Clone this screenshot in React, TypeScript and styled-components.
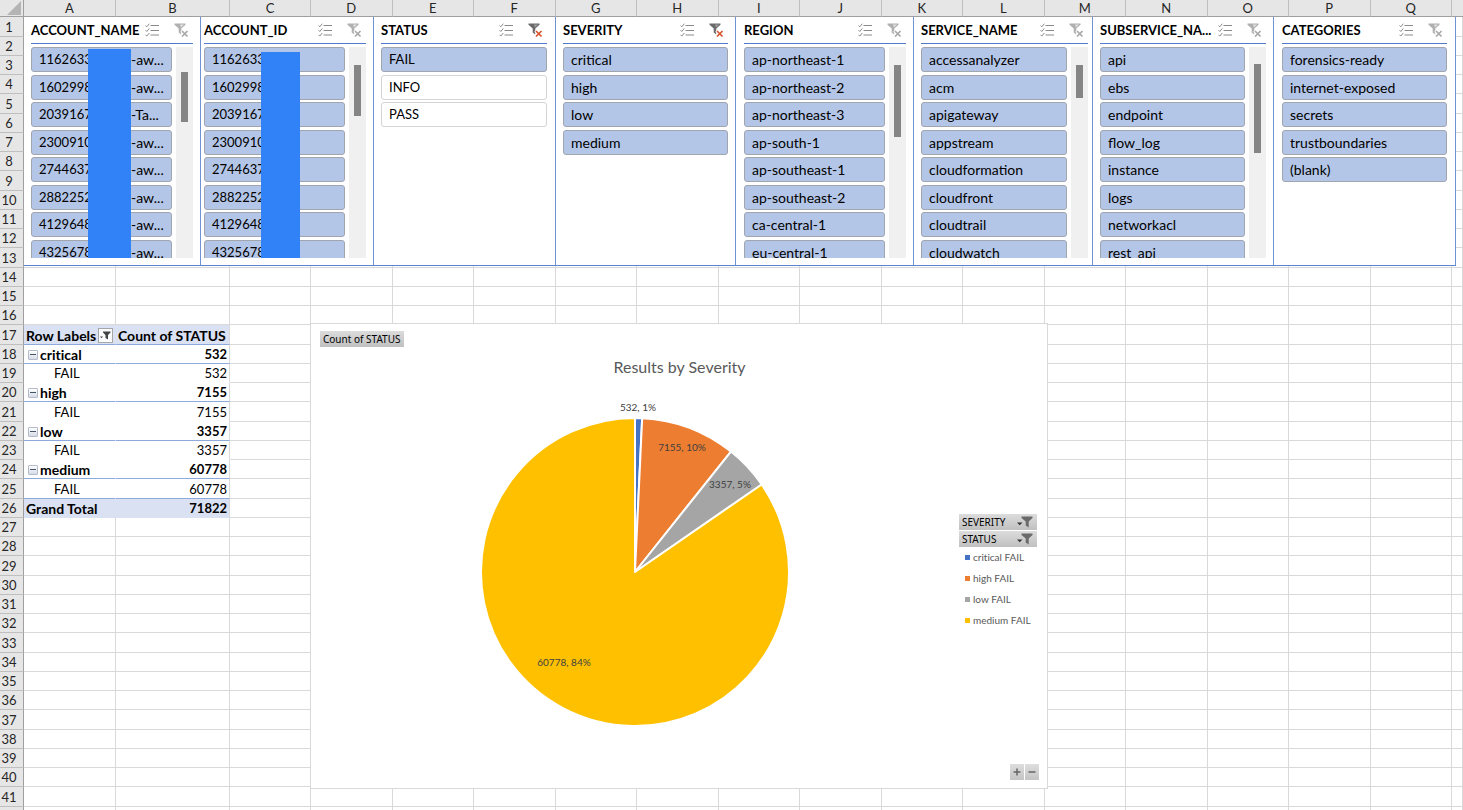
import React from "react";
import styled, { createGlobalStyle } from "styled-components";

const Global = createGlobalStyle`
  *, *::before, *::after { box-sizing: border-box; }
  html, body { margin: 0; padding: 0; background: #fff; }
  body {
    font-family: Lato, "Liberation Sans", sans-serif;
    font-variant-ligatures: none;
    color: #000;
  }
  button { font-family: inherit; color: inherit; cursor: pointer; }
`;

const Workbook = styled.main`
  position: relative;
  height: 100vh;
  overflow: hidden;
  font-size: 13px;
`;

const Sheet = styled.table`
  width: 100%;
  table-layout: fixed;
  border-collapse: separate;
  border-spacing: 0;
`;

const Col = styled.col<{ $w?: number }>`
  width: ${(p) => (p.$w ? `${p.$w}px` : "auto")};
`;

const ColumnHead = styled.th`
  height: 17px;
  padding: 0;
  background: #e6e6e6;
  border-right: 1px solid #bfbfbf;
  border-bottom: 1px solid #9f9f9f;
  font-size: 13px;
  font-weight: 400;
  line-height: 16px;
  color: #262626;
  text-align: center;
  &:first-child { border-right-color: #9f9f9f; }
  &:last-child { border-right: 0; }
`;

const CornerMark = styled.svg`
  display: block;
  margin-left: auto;
  margin-right: 2px;
`;

const RowHead = styled.th`
  padding: 1px 5px 0 0;
  background: #e6e6e6;
  border-right: 1px solid #9f9f9f;
  border-bottom: 1px solid #bfbfbf;
  font-size: 13px;
  font-weight: 400;
  line-height: 17px;
  color: #262626;
  text-align: center;
  white-space: nowrap;
`;

const SheetRow = styled.tr<{ $tall: boolean }>`
  height: ${(p) => (p.$tall ? 20 : 19)}px;
`;

type CellKind = "plain" | "head" | "group" | "item" | "lastItem" | "total";

const cellFill = (k: CellKind) => (k === "head" || k === "total" ? "#d9e1f2" : "#fff");
const cellRule = (k: CellKind) => {
  if (k === "plain") return "#d9d9d9";
  if (k === "head" || k === "group" || k === "lastItem") return "#8ea9db";
  return k === "total" ? "#d9e1f2" : "#fff";
};
const isBold = (k: CellKind) => k === "head" || k === "group" || k === "total";

const Cell = styled.td<{ $kind?: CellKind; $right?: boolean }>`
  padding: 1px 2px 0;
  background: ${(p) => cellFill(p.$kind ?? "plain")};
  border-right: 1px solid
    ${(p) => (!p.$kind || p.$kind === "plain" || p.$right ? "#d9d9d9" : cellFill(p.$kind))};
  border-bottom: 1px solid ${(p) => cellRule(p.$kind ?? "plain")};
  font-weight: ${(p) => (isBold(p.$kind ?? "plain") ? 700 : 400)};
  line-height: 17px;
  text-align: ${(p) => (p.$right ? "right" : "left")};
  white-space: nowrap;
`;

const CellLine = styled.div<{ $item?: boolean }>`
  display: flex;
  align-items: center;
  height: 17px;
  gap: 2px;
  padding-left: ${(p) => (p.$item ? 28 : 0)}px;
  font-size: ${(p) => (p.$item ? 13 : 14)}px;
`;

const HeadLabel = styled.span`
  flex: 1;
`;

const DropButton = styled.button`
  display: grid;
  place-items: center;
  flex: none;
  width: 15px;
  height: 15px;
  padding: 0;
  border: 1px solid #a6a6a6;
  background: #fafbfd;
`;

const Collapse = styled.button`
  display: grid;
  place-items: center;
  width: 10px;
  height: 10px;
  margin-left: 2px;
  padding: 0;
  border: 1px solid #b4bccb;
  border-radius: 1px;
  background: linear-gradient(#fff, #d6dbe6);
`;

const Slicers = styled.section`
  position: absolute;
  top: 17px;
  left: 24px;
  right: 7px;
  display: grid;
  grid-template-columns: 177fr 173fr 182fr 180fr 178fr 179fr 181fr 182fr;
  grid-template-rows: minmax(0, 1fr);
  height: 249px;
  border-bottom: 1px solid #5b84cf;
  background: #fff;
`;

const SlicerPanel = styled.section<{ $left: number; $right: number }>`
  position: relative;
  display: flex;
  flex-direction: column;
  min-width: 0;
  padding: 0 ${(p) => p.$right}px 7px ${(p) => p.$left}px;
  border-right: 1px solid #6f93d2;
`;

const SlicerHeader = styled.header`
  display: flex;
  flex: none;
  align-items: center;
  height: 27px;
  padding-right: 4px;
  border-bottom: 1px solid #4f7ac9;
`;

const SlicerTitle = styled.h2`
  flex: 1;
  min-width: 0;
  margin: 0;
  font-size: 13px;
  font-weight: 700;
  line-height: 20px;
  white-space: nowrap;
`;

const IconButton = styled.button`
  display: block;
  flex: none;
  margin-left: 14px;
  padding: 0;
  border: 0;
  background: none;
  line-height: 0;
  &:first-of-type { margin-left: 0; }
`;

const SlicerBody = styled.div`
  display: flex;
  gap: 4px;
  flex: 1;
  min-height: 0;
  padding-top: 3px;
`;

const Items = styled.div`
  flex: 1;
  min-width: 0;
  overflow: hidden;
`;

const Item = styled.button<{ $on: boolean; $compact: boolean }>`
  display: flex;
  width: 100%;
  height: 25px;
  margin: 0 0 2px;
  padding: 0 9px 0 7px;
  border: 1px solid ${(p) => (p.$on ? "#a0a5ae" : "#d4d4d4")};
  border-radius: 3px;
  background: ${(p) => (p.$on ? "#b4c6e7" : "#fff")};
  font-size: ${(p) => (p.$compact ? 13 : 14)}px;
  line-height: 23px;
  text-align: left;
  white-space: nowrap;
  &:nth-child(odd) { margin-bottom: 3px; }
`;

const ItemText = styled.span`
  flex: 1;
`;

const ItemTail = styled.span`
  width: 31px;
  font-size: 14px;
`;

const Track = styled.div`
  flex: none;
  width: 17px;
  background: #f0f0f0;
`;

const Thumb = styled.div<{ $top: number; $size: number }>`
  width: 7px;
  height: ${(p) => p.$size}px;
  margin: ${(p) => p.$top}px auto 0;
  background: #858585;
`;

const Redaction = styled.div<{ $left: number; $top: number; $w: number }>`
  position: absolute;
  left: ${(p) => p.$left}px;
  top: ${(p) => p.$top}px;
  bottom: 7px;
  width: ${(p) => p.$w}px;
  background: #3182f6;
`;

const Chart = styled.figure`
  position: absolute;
  top: 323px;
  left: 310px;
  right: 415px;
  display: grid;
  grid-template-columns: 1fr auto;
  grid-template-rows: auto auto 1fr auto;
  height: 466px;
  margin: 0;
  padding: 7px 8px 8px 9px;
  border: 1px solid #d9d9d9;
  background: #fff;
`;

const FieldButton = styled.button`
  display: flex;
  align-items: center;
  justify-content: space-between;
  width: 78px;
  height: 16px;
  padding: 0 4px 0 3px;
  border: 0;
  background: linear-gradient(#dcdcdc, #c0c0c0);
  font-family: "Noto Sans", sans-serif;
  font-size: 10px;
  line-height: 16px;
  white-space: nowrap;
`;

const ValueButton = styled(FieldButton)`
  grid-column: 1 / -1;
  width: 84px;
`;

const ChartTitle = styled.figcaption`
  grid-column: 1 / -1;
  padding-top: 10px;
  font-size: 16px;
  line-height: 20px;
  color: #595959;
  text-align: center;
`;

const Plot = styled.svg`
  display: block;
  justify-self: center;
  margin: 21px 10px 0 0;
`;

const PlotLabel = styled.text`
  font-size: 10px;
  fill: #404040;
  text-anchor: middle;
`;

const Side = styled.aside`
  display: flex;
  flex-direction: column;
  gap: 1px;
  margin-right: 2px;
  padding-top: 137px;
`;

const Legend = styled.ul`
  display: flex;
  flex-direction: column;
  gap: 5px;
  margin: 1px 0 0;
  padding: 0 0 0 6px;
  list-style: none;
`;

const LegendItem = styled.li<{ $c: string }>`
  display: flex;
  align-items: center;
  gap: 3px;
  height: 16px;
  font-size: 10px;
  line-height: 16px;
  color: #595959;
  white-space: nowrap;
  &::before {
    content: "";
    width: 5px;
    height: 5px;
    background: ${(p) => p.$c};
  }
`;

const ZoomButtons = styled.div`
  grid-column: 1 / -1;
  display: flex;
  justify-content: flex-end;
  gap: 1px;
`;

const ZoomButton = styled.button`
  display: grid;
  place-items: center;
  width: 14px;
  height: 16px;
  padding: 0;
  border: 0;
  background: linear-gradient(#dedede, #c4c4c4);
`;

const MultiSelectIcon = () => (
  <svg width="15" height="14" viewBox="0 0 15 14" fill="none" stroke="#8a8a8a">
    <path d="M5.5 2.5H14M5.5 7.5H14M5.5 12H14" />
    <path d="M.5 2.5l1.3 1.3L4.3.7M.5 7.2l1.3 1.3 2.5-3.1M.5 11.8l1.3 1.3 2.5-3.1" />
  </svg>
);

const ClearFilterIcon = ({ active }: { active: boolean }) => (
  <svg width="15" height="15" viewBox="0 0 15 15">
    <path d="M.5.5h11v1.200L7.300 5.500v6L4.700 9.500v-4L.5 1.700z" fill={active ? "#6a6a6a" : "#b0b0b0"} />
    <path d="M6 1.500h4L7 4.500z" fill="#fff" opacity={active ? 0.35 : 0.6} />
    <path d="M7.500 7.500l6 6M13.500 7.500l-6 6" stroke="#fff" strokeWidth="3.500" />
    <path d="M8 8l5.500 5.500M13.500 8L8 13.500" stroke={active ? "#d9532c" : "#a8a8a8"} strokeWidth="1.700" />
  </svg>
);

const FieldFilterIcon = () => (
  <svg width="16" height="12" viewBox="0 0 16 12" fill="#6a6a6a">
    <path d="M0 6.500h5.500L2.700 9.300z" fill="#333" />
    <path d="M4.500.500h11v1.500L11.700 5.500v6l-3-2v-4l-4.200-3.500z" />
  </svg>
);

const PivotFilterIcon = () => (
  <svg width="11" height="9" viewBox="0 0 11 9" fill="#444">
    <path d="M0 5.500h3L1.500 7.200z" />
    <path d="M3 .500h7.500v1L8 4v4.500L5.500 7V4L3 1.500z" />
  </svg>
);

type SlicerData = {
  title: string;
  left?: number;
  right?: number;
  filtered?: boolean;
  compact?: boolean;
  items: string[];
  tails?: string[];
  off?: string[];
  thumb?: [number, number];
  cover?: [number, number, number];
};

const accounts = ["1162633", "1602998", "2039167", "2300910", "2744637", "2882252", "4129648", "4325678"];

const slicers: SlicerData[] = [
  {
    title: "ACCOUNT_NAME",
    compact: true,
    items: accounts,
    tails: accounts.map((a) => (a === "2039167" ? "-Ta..." : "-aw...")),
    thumb: [25, 50],
    cover: [64, 32, 43],
  },
  { title: "ACCOUNT_ID", left: 3, compact: true, items: accounts, thumb: [18, 51], cover: [60, 35, 39] },
  { title: "STATUS", right: 8, filtered: true, compact: true, items: ["FAIL", "INFO", "PASS"], off: ["INFO", "PASS"] },
  { title: "SEVERITY", filtered: true, items: ["critical", "high", "low", "medium"] },
  {
    title: "REGION",
    left: 8,
    items: ["ap-northeast-1", "ap-northeast-2", "ap-northeast-3", "ap-south-1", "ap-southeast-1", "ap-southeast-2", "ca-central-1", "eu-central-1"],
    thumb: [18, 72],
  },
  {
    title: "SERVICE_NAME",
    right: 4,
    items: ["accessanalyzer", "acm", "apigateway", "appstream", "cloudformation", "cloudfront", "cloudtrail", "cloudwatch"],
    thumb: [18, 33],
  },
  {
    title: "SUBSERVICE_NA...",
    items: ["api", "ebs", "endpoint", "flow_log", "instance", "logs", "networkacl", "rest_api"],
    thumb: [17, 89],
  },
  {
    title: "CATEGORIES",
    left: 8,
    right: 8,
    items: ["forensics-ready", "internet-exposed", "secrets", "trustboundaries", "(blank)"],
  },
];

const Slicer = ({ data }: { data: SlicerData }) => (
  <SlicerPanel $left={data.left ?? 7} $right={data.right ?? 7}>
    <SlicerHeader>
      <SlicerTitle>{data.title}</SlicerTitle>
      <IconButton type="button" aria-label="Multi-select">
        <MultiSelectIcon />
      </IconButton>
      <IconButton type="button" aria-label="Clear filter">
        <ClearFilterIcon active={!!data.filtered} />
      </IconButton>
    </SlicerHeader>
    <SlicerBody>
      <Items>
        {data.items.map((item, i) => (
          <Item key={item} type="button" $on={!data.off?.includes(item)} $compact={!!data.compact}>
            <ItemText>{item}</ItemText>
            {data.tails && <ItemTail>{data.tails[i]}</ItemTail>}
          </Item>
        ))}
      </Items>
      {data.thumb && (
        <Track>
          <Thumb $top={data.thumb[0]} $size={data.thumb[1]} />
        </Track>
      )}
    </SlicerBody>
    {data.cover && <Redaction $left={data.cover[0]} $top={data.cover[1]} $w={data.cover[2]} />}
  </SlicerPanel>
);

const pivot: Record<number, { kind: CellKind; label: string; count: string }> = {
  17: { kind: "head", label: "Row Labels", count: "Count of STATUS" },
  18: { kind: "group", label: "critical", count: "532" },
  19: { kind: "item", label: "FAIL", count: "532" },
  20: { kind: "group", label: "high", count: "7155" },
  21: { kind: "item", label: "FAIL", count: "7155" },
  22: { kind: "group", label: "low", count: "3357" },
  23: { kind: "item", label: "FAIL", count: "3357" },
  24: { kind: "group", label: "medium", count: "60778" },
  25: { kind: "lastItem", label: "FAIL", count: "60778" },
  26: { kind: "total", label: "Grand Total", count: "71822" },
};

const PivotCells = ({ row }: { row: number }) => {
  const data = pivot[row];
  if (!data) {
    return (
      <>
        <Cell />
        <Cell />
      </>
    );
  }
  const { kind, label, count } = data;
  return (
    <>
      <Cell $kind={kind}>
        <CellLine $item={kind === "item" || kind === "lastItem"}>
          {kind === "group" && (
            <Collapse type="button" aria-label={`Collapse ${label}`}>
              <svg width="6" height="2" viewBox="0 0 6 2">
                <path d="M0 .500h6" stroke="#44546a" />
              </svg>
            </Collapse>
          )}
          {kind === "head" ? <HeadLabel>{label}</HeadLabel> : label}
          {kind === "head" && (
            <DropButton type="button" aria-label="Filter row labels">
              <PivotFilterIcon />
            </DropButton>
          )}
        </CellLine>
      </Cell>
      <Cell $kind={kind} $right>
        {kind === "head" ? <CellLine>{count}</CellLine> : count}
      </Cell>
    </>
  );
};

const columns = "ABCDEFGHIJKLMNOPQ".split("");
const lastNumbered = 41;
const rows = Array.from({ length: lastNumbered + 1 }, (_, i) => i + 1);

const slices = [
  { name: "critical FAIL", value: 532, color: "#4472c4", label: "532, 1%", x: 157, y: 13 },
  { name: "high FAIL", value: 7155, color: "#ed7d31", label: "7155, 10%", x: 201, y: 53 },
  { name: "low FAIL", value: 3357, color: "#a5a5a5", label: "3357, 5%", x: 249, y: 90 },
  { name: "medium FAIL", value: 60778, color: "#ffc000", label: "60778, 84%", x: 83, y: 268 },
];

const Pie = () => {
  const cx = 154;
  const cy = 174;
  const r = 154;
  const total = slices.reduce((sum, s) => sum + s.value, 0);
  let start = 0;
  const point = (t: number) => {
    const a = t * Math.PI * 2;
    return `${(cx + r * Math.sin(a)).toFixed(2)} ${(cy - r * Math.cos(a)).toFixed(2)}`;
  };
  return (
    <Plot width="308" height="330" viewBox="0 0 308 330" role="img" aria-label="Results by Severity">
      {slices.map((s) => {
        const end = start + s.value / total;
        const d = `M${cx} ${cy}L${point(start)}A${r} ${r} 0 ${end - start > 0.5 ? 1 : 0} 1 ${point(end)}Z`;
        start = end;
        return <path key={s.name} d={d} fill={s.color} stroke="#fff" strokeWidth="2" strokeLinejoin="round" />;
      })}
      {slices.map((s) => (
        <PlotLabel key={s.name} x={s.x} y={s.y}>
          {s.label}
        </PlotLabel>
      ))}
    </Plot>
  );
};

export default function App() {
  return (
    <>
      <Global />
      <Workbook>
        <Sheet>
          <colgroup>
            <Col $w={24} />
            <Col $w={92} />
            <Col $w={114} />
            <Col $w={81} />
            {columns.slice(3).map((c) => (
              <Col key={c} />
            ))}
            <Col $w={11} />
          </colgroup>
          <thead>
            <tr>
              <ColumnHead>
                <CornerMark width="14" height="14" viewBox="0 0 14 14">
                  <path d="M14 0v14H0z" fill="#b4b4b4" />
                </CornerMark>
              </ColumnHead>
              {columns.map((c) => (
                <ColumnHead key={c} scope="col">
                  {c}
                </ColumnHead>
              ))}
              <ColumnHead />
            </tr>
          </thead>
          <tbody>
            {rows.map((n) => (
              <SheetRow key={n} $tall={n % 4 === 1}>
                <RowHead scope="row">{n <= lastNumbered ? n : null}</RowHead>
                <PivotCells row={n} />
                {columns.slice(2).map((c) => (
                  <Cell key={c} />
                ))}
                <Cell />
              </SheetRow>
            ))}
          </tbody>
        </Sheet>

        <Slicers aria-label="Slicers">
          {slicers.map((s) => (
            <Slicer key={s.title} data={s} />
          ))}
        </Slicers>

        <Chart>
          <ValueButton type="button">Count of STATUS</ValueButton>
          <ChartTitle>Results by Severity</ChartTitle>
          <Pie />
          <Side>
            <FieldButton type="button">
              SEVERITY
              <FieldFilterIcon />
            </FieldButton>
            <FieldButton type="button">
              STATUS
              <FieldFilterIcon />
            </FieldButton>
            <Legend>
              {slices.map((s) => (
                <LegendItem key={s.name} $c={s.color}>
                  {s.name}
                </LegendItem>
              ))}
            </Legend>
          </Side>
          <ZoomButtons>
            <ZoomButton type="button" aria-label="Expand entire field">
              <svg width="8" height="8" viewBox="0 0 8 8">
                <path d="M4 .500v7M.500 4h7" stroke="#666" strokeWidth="1.500" />
              </svg>
            </ZoomButton>
            <ZoomButton type="button" aria-label="Collapse entire field">
              <svg width="8" height="8" viewBox="0 0 8 8">
                <path d="M.500 4h7" stroke="#666" strokeWidth="1.500" />
              </svg>
            </ZoomButton>
          </ZoomButtons>
        </Chart>
      </Workbook>
    </>
  );
}
